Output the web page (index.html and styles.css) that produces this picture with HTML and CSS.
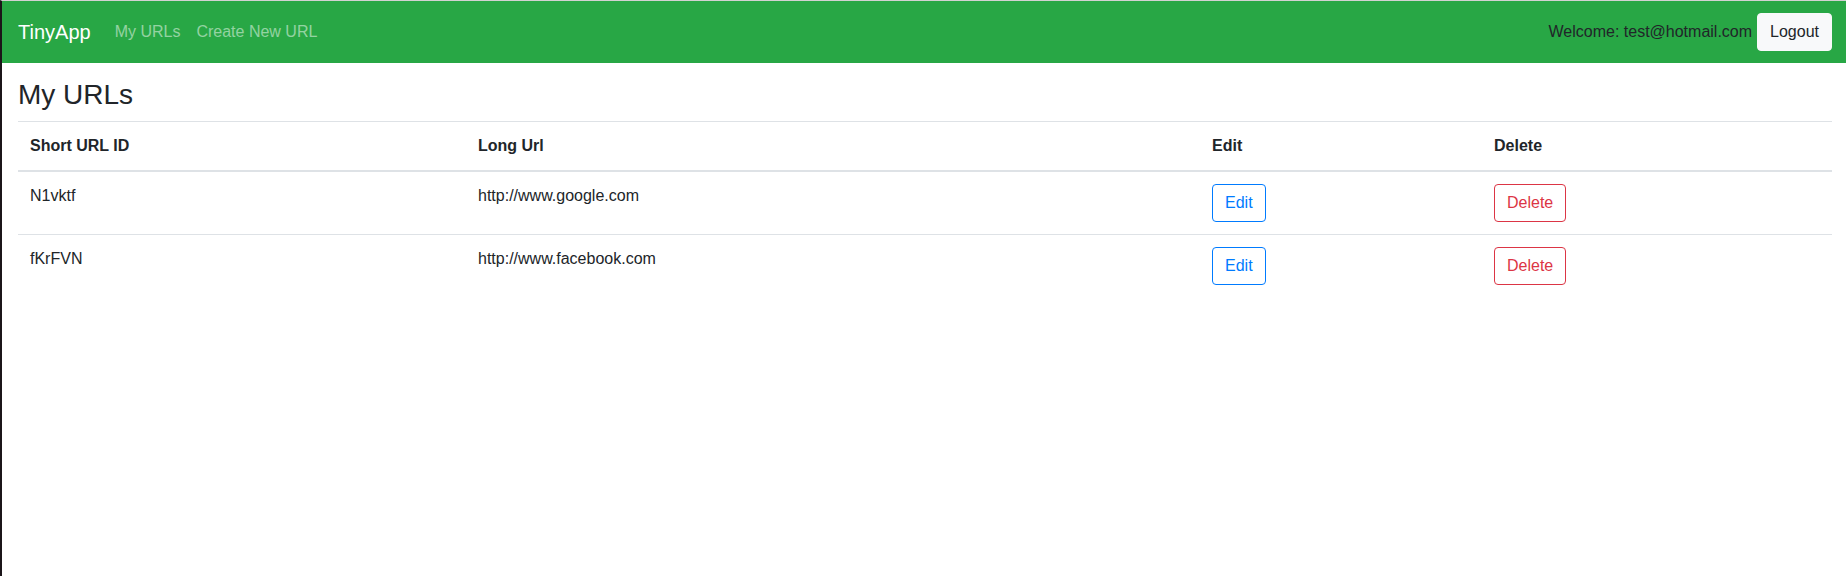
FILE: index.html
```html
<!DOCTYPE html>
<html lang="en">
<head>
<meta charset="utf-8">
<title>TinyApp</title>
<link rel="stylesheet" href="styles.css">
</head>
<body>
<nav class="navbar">
  <a class="brand" href="#">TinyApp</a>
  <ul class="nav-links">
    <li><a class="nav-link" href="#">My URLs</a></li>
    <li><a class="nav-link" href="#">Create New URL</a></li>
  </ul>
  <div class="user">
    <span class="welcome">Welcome: test@hotmail.com</span>
    <button class="btn btn-light" type="button">Logout</button>
  </div>
</nav>
<main class="content">
  <h1 class="page-title">My URLs</h1>
  <table class="url-table">
    <colgroup>
      <col class="col-id">
      <col class="col-long">
      <col class="col-edit">
      <col class="col-delete">
    </colgroup>
    <thead>
      <tr>
        <th>Short URL ID</th>
        <th>Long Url</th>
        <th>Edit</th>
        <th>Delete</th>
      </tr>
    </thead>
    <tbody>
      <tr>
        <td>N1vktf</td>
        <td>http://www.google.com</td>
        <td><button class="btn btn-outline-primary" type="button">Edit</button></td>
        <td><button class="btn btn-outline-danger" type="button">Delete</button></td>
      </tr>
      <tr>
        <td>fKrFVN</td>
        <td>http://www.facebook.com</td>
        <td><button class="btn btn-outline-primary" type="button">Edit</button></td>
        <td><button class="btn btn-outline-danger" type="button">Delete</button></td>
      </tr>
    </tbody>
  </table>
</main>
</body>
</html>
```
FILE: styles.css
```css
html, body {
  height: 100%;
}
body {
  margin: 0;
  box-sizing: border-box;
  border-top: 1px solid #d2d2d2;
  border-left: 2px solid #1b1519;
  background: #ffffff;
  font-family: "Liberation Sans", Arial, sans-serif;
  font-size: 16px;
  line-height: 1.5;
  color: #212529;
}

.navbar {
  display: flex;
  align-items: center;
  height: 62px;
  box-sizing: border-box;
  padding: 12px 14px 12px 16px;
  background: #28a745;
}
.brand {
  font-size: 20px;
  line-height: 30px;
  color: #ffffff;
  text-decoration: none;
  margin-right: 16px;
}
.nav-links {
  display: flex;
  list-style: none;
  margin: 0;
  padding: 0;
}
.nav-link {
  display: block;
  padding: 8px 8px;
  color: rgba(255, 255, 255, 0.5);
  text-decoration: none;
}
.user {
  margin-left: auto;
  display: flex;
  align-items: center;
}
.welcome {
  color: #212529;
  margin-right: 5px;
}

.btn {
  display: inline-block;
  box-sizing: border-box;
  height: 38px;
  padding: 6px 12px;
  font-family: inherit;
  font-size: 16px;
  line-height: 24px;
  border: 1px solid transparent;
  border-radius: 4px;
  background: transparent;
  vertical-align: top;
  cursor: pointer;
}
.btn-light {
  background: #f8f9fa;
  border-color: #f8f9fa;
  color: #212529;
}
.btn-outline-primary {
  color: #007bff;
  border-color: #007bff;
}
.btn-outline-danger {
  color: #dc3545;
  border-color: #dc3545;
}

.content {
  padding: 0 14px 0 16px;
}
.page-title {
  margin: 15px 0 9px;
  font-size: 28px;
  line-height: 34px;
  font-weight: 500;
  color: #212529;
}

.url-table {
  width: 100%;
  border-collapse: collapse;
  table-layout: fixed;
}
.col-id { width: 448px; }
.col-long { width: 734px; }
.col-edit { width: 282px; }
.col-delete { width: auto; }

.url-table th,
.url-table td {
  padding: 12px;
  text-align: left;
  vertical-align: top;
  border-top: 1px solid #dee2e6;
}
.url-table th {
  font-weight: 700;
  border-bottom: 2px solid #dee2e6;
}
```
